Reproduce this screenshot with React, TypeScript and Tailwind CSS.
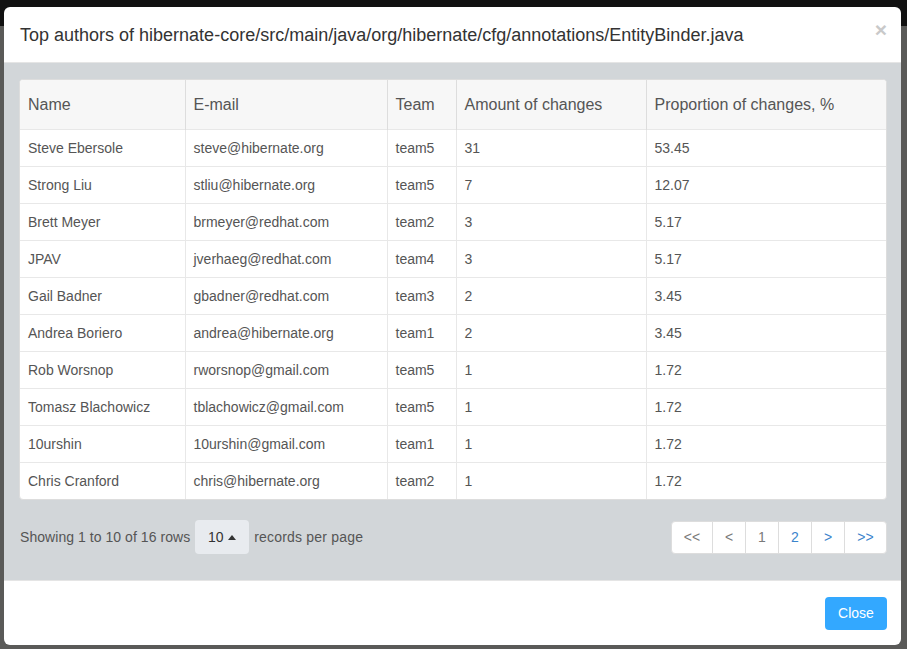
import React from "react";

interface Author { name: string; email: string; team: string; amount: number; share: string; }

const authors: Author[] = [
  { name: "Steve Ebersole", email: "steve@hibernate.org", team: "team5", amount: 31, share: "53.45" },
  { name: "Strong Liu", email: "stliu@hibernate.org", team: "team5", amount: 7, share: "12.07" },
  { name: "Brett Meyer", email: "brmeyer@redhat.com", team: "team2", amount: 3, share: "5.17" },
  { name: "JPAV", email: "jverhaeg@redhat.com", team: "team4", amount: 3, share: "5.17" },
  { name: "Gail Badner", email: "gbadner@redhat.com", team: "team3", amount: 2, share: "3.45" },
  { name: "Andrea Boriero", email: "andrea@hibernate.org", team: "team1", amount: 2, share: "3.45" },
  { name: "Rob Worsnop", email: "rworsnop@gmail.com", team: "team5", amount: 1, share: "1.72" },
  { name: "Tomasz Blachowicz", email: "tblachowicz@gmail.com", team: "team5", amount: 1, share: "1.72" },
  { name: "10urshin", email: "10urshin@gmail.com", team: "team1", amount: 1, share: "1.72" },
  { name: "Chris Cranford", email: "chris@hibernate.org", team: "team2", amount: 1, share: "1.72" },
];

const pages = [
  { label: "<<", w: "w-[40px]", blue: false },
  { label: "<", w: "w-[33px]", blue: false },
  { label: "1", w: "w-[33px]", blue: false },
  { label: "2", w: "w-[33px]", blue: true },
  { label: ">", w: "w-[33px]", blue: true },
  { label: ">>", w: "w-[42px]", blue: true },
];

export default function App() {
  return (
    <div className="relative h-[649px] w-full overflow-hidden bg-[#5a5a58] font-['Liberation_Sans',Arial,sans-serif]">
      <div className="h-[26px] bg-[#111]" />

      <div className="absolute left-[4px] top-[7px] flex h-[638px] w-[897px] flex-col overflow-hidden rounded-[6px] bg-white">
        <header className="flex h-[56px] shrink-0 items-center justify-between border-b border-[#e5e5e5] pl-[16px] pr-[14px]">
          <h4 className="pt-[1px] text-[18px] text-[#333]">Top authors of hibernate-core/src/main/java/org/hibernate/cfg/annotations/EntityBinder.java</h4>
          <button className="-mt-[10px] text-[21px] font-bold leading-none text-[#c9c9c9]">×</button>
        </header>

        <div className="flex flex-1 flex-col bg-[#d2d6d9] pl-[15px] pr-[14px] pt-[16px]">
          <div className="overflow-hidden rounded-[4px] border border-[#dddddd] bg-white">
            <table className="w-full table-fixed border-collapse text-left text-[#555]">
              <thead>
                <tr className="h-[49px] bg-[#f7f7f7] text-[16px]">
                  <th className="w-[165px] px-[8px] pt-[2px] font-normal">Name</th>
                  <th className="w-[202px] border-l border-[#dddddd] px-[8px] pt-[2px] font-normal">E-mail</th>
                  <th className="w-[69px] border-l border-[#dddddd] px-[8px] pt-[2px] font-normal">Team</th>
                  <th className="w-[190px] border-l border-[#dddddd] px-[8px] pt-[2px] font-normal">Amount of changes</th>
                  <th className="border-l border-[#dddddd] px-[8px] pt-[2px] font-normal">Proportion of changes, %</th>
                </tr>
              </thead>
              <tbody className="text-[14px]">
                {authors.map(a => (
                  <tr key={a.email} className="h-[37px] border-t border-[#e8e8e8]">
                    <td className="px-[8px] pt-[2px]">{a.name}</td>
                    <td className="border-l border-[#e8e8e8] px-[8px] pt-[2px]">{a.email}</td>
                    <td className="border-l border-[#e8e8e8] px-[8px] pt-[2px]">{a.team}</td>
                    <td className="border-l border-[#e8e8e8] px-[8px] pt-[2px]">{a.amount}</td>
                    <td className="border-l border-[#e8e8e8] px-[8px] pt-[2px]">{a.share}</td>
                  </tr>
                ))}
              </tbody>
            </table>
          </div>

          <div className="mt-[20px] flex items-center justify-between text-[14px] text-[#555]">
            <div className="flex items-center">
              <span className="pl-[1px] tracking-[0.05px]">Showing 1 to 10 of 16 rows</span>
              <button className="mx-[5px] flex h-[34px] w-[54px] items-center justify-center gap-[5px] rounded-[4px] bg-[#e8ebef] text-[#333]">
                <span className="text-[14px]">10</span>
                <svg width="8" height="5" viewBox="0 0 8 5"><path d="M0 5 L4 0 L8 5 Z" fill="#333" /></svg>
              </button>
              <span className="tracking-[0.2px]">records per page</span>
            </div>
            <div className="flex h-[33px] overflow-hidden rounded-[4px] border border-[#dddddd] bg-white">
              {pages.map((p, i) => (
                <div
                  key={p.label}
                  className={`flex items-center justify-center ${p.w} ${i > 0 ? "border-l border-[#dddddd]" : ""} ${p.blue ? "text-[#3b84cc]" : "text-[#7a7a7a]"}`}
                >
                  {p.label}
                </div>
              ))}
            </div>
          </div>
          <div className="h-[26px]" />
        </div>

        <footer className="flex h-[65px] shrink-0 items-center justify-end border-t border-[#e5e5e5] pr-[14px]">
          <button className="h-[33px] w-[62px] rounded-[4px] bg-[#33a8ff] text-[14px] text-white">Close</button>
        </footer>
      </div>
    </div>
  );
}
